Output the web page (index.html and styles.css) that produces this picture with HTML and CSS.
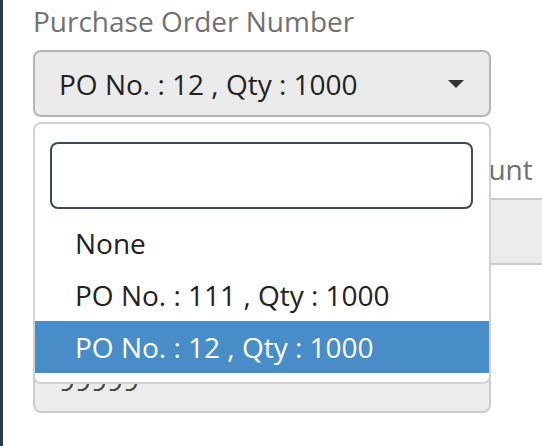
FILE: index.html
```html
<!DOCTYPE html>
<html>
<head>
<meta charset="utf-8">
<link rel="stylesheet" href="styles.css">
</head>
<body>
<div class="layout">
  <div class="sidebar"></div>
  <main class="main">
    <div class="field">
      <label class="label">Purchase Order Number</label>
      <div class="select-wrap">
        <div class="select">
          <span class="select-text">PO No. : 12 , Qty : 1000</span>
          <span class="arrow"></span>
        </div>
        <div class="dropdown">
          <div class="search-wrap"><input class="search" type="text"></div>
          <ul class="options">
            <li class="option">None</li>
            <li class="option">PO No. : 111 , Qty : 1000</li>
            <li class="option selected">PO No. : 12 , Qty : 1000</li>
          </ul>
        </div>
      </div>
    </div>
    <div class="field">
      <label class="label">Purchase Orders Outstanding Amount</label>
      <div class="input wide"></div>
    </div>
    <div class="field">
      <label class="label">Amount</label>
      <div class="input"><span class="input-text">99999</span></div>
    </div>
  </main>
</div>
</body>
</html>
```

FILE: styles.css
```css
* { box-sizing: border-box; }
html, body { margin: 0; padding: 0; background: #fff; }
body {
  font-family: "Open Sans", "Liberation Sans", sans-serif;
  width: 542px;
  height: 446px;
  overflow: hidden;
}
.layout {
  display: flex;
  height: 446px;
}
.sidebar {
  width: 3px;
  flex: none;
  background: #2b3a4b;
}
.main {
  flex: 1;
  padding: 1px 0 0 30px;
  min-width: 0;
  overflow: hidden;
}
.field {
  margin-bottom: 32px;
}
.label {
  display: block;
  font-size: 28px;
  line-height: 40px;
  color: #737070;
  margin-bottom: 9px;
  white-space: nowrap;
}
.select-wrap {
  position: relative;
  width: 458px;
}
.select {
  height: 67px;
  border: 2px solid #b4b4b4;
  border-radius: 8px;
  background: #ebebeb;
  display: flex;
  align-items: center;
  padding: 0 24px;
  justify-content: space-between;
}
.select-text {
  font-size: 28px;
  color: #222;
}
.arrow {
  width: 0;
  height: 0;
  border-left: 8px solid transparent;
  border-right: 8px solid transparent;
  border-top: 8px solid #333;
  margin-right: 1px;
}
.dropdown {
  position: absolute;
  left: 0;
  top: 72px;
  width: 458px;
  background: #fff;
  border: 2px solid #d2d2d2;
  border-radius: 8px;
  z-index: 10;
  padding-bottom: 9px;
}
.search-wrap {
  padding: 18px 16px 8px 15px;
}
.search {
  display: block;
  width: 100%;
  height: 67px;
  border: 2px solid #3e4a5a;
  border-radius: 8px;
  background: #fff;
  margin: 0;
  padding: 0 12px;
  font-size: 28px;
  outline: none;
}
.options {
  list-style: none;
  margin: 0;
  padding: 0;
}
.option {
  height: 52px;
  line-height: 52px;
  padding-left: 40px;
  font-size: 28px;
  color: #222;
  white-space: nowrap;
}
.option.selected {
  background: #488cc8;
  color: #fff;
}
.input {
  height: 67px;
  width: 458px;
  border: 2px solid #cccccc;
  border-radius: 8px;
  background: #ececec;
  display: flex;
  align-items: center;
  padding: 0 24px;
}
.input.wide {
  width: 560px;
}
.input-text {
  font-size: 28px;
  color: #444;
}
```
